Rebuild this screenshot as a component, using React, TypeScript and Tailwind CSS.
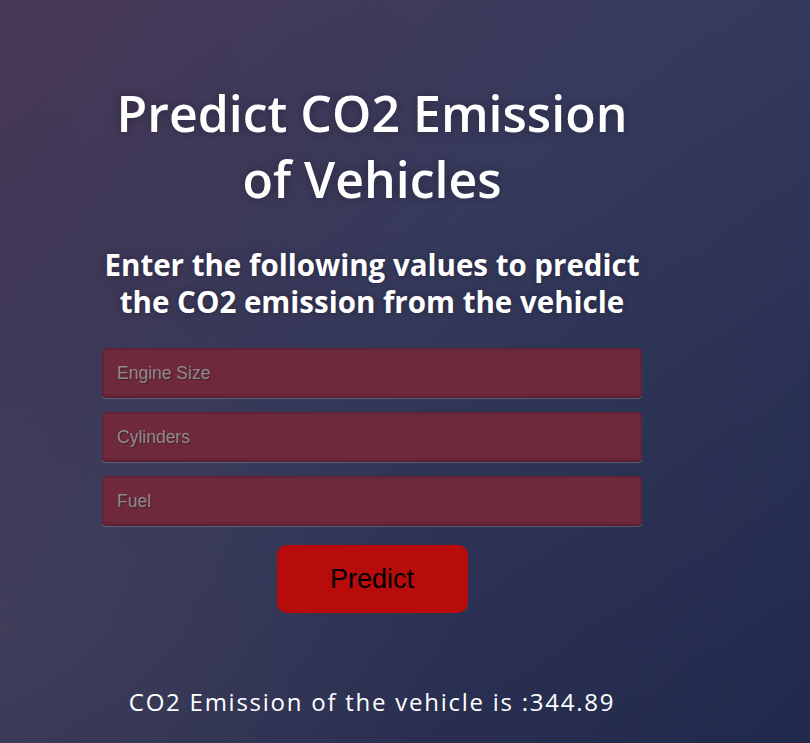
export default function App() {
  const fields = ["Engine Size", "Cylinders", "Fuel"];

  return (
    <div className="relative w-full h-[743px] overflow-hidden bg-[linear-gradient(135deg,#4a3450_0%,#363858_45%,#222a4e_100%)]">
      <div className="absolute inset-0 bg-[radial-gradient(ellipse_at_0%_85%,rgba(90,80,100,0.35)_0%,rgba(90,80,100,0)_40%)]" />
      <div className="absolute inset-0 bg-[linear-gradient(to_bottom,rgba(57,100,160,0.08)_0%,rgba(20,30,60,0.1)_100%)]" />

      <div className="relative pl-[102px] pt-[80px] w-[642px] flex flex-col items-center font-['Open_Sans',sans-serif] text-white">
        <h1 className="text-[50px] font-semibold leading-[66px] text-center whitespace-nowrap [text-shadow:0_0_10px_rgba(0,0,0,0.3)]">
          Predict CO2 Emission
          <br />
          of Vehicles
        </h1>

        <h2 className="mt-[34px] text-[29.5px] font-bold leading-[37px] text-center whitespace-nowrap [text-shadow:0_0_6px_rgba(0,0,0,0.3)]">
          Enter the following values to predict
          <br />
          the CO2 emission from the vehicle
        </h2>

        <form className="mt-[28px] w-full flex flex-col gap-[14px]" onSubmit={(e) => e.preventDefault()}>
          {fields.map((f) => (
            <input
              key={f}
              type="text"
              placeholder={f}
              className="w-full h-[50px] px-[14px] rounded-[4px] bg-[#6e293c] border border-[#5a1f30] shadow-[inset_0_-1px_3px_rgba(0,0,0,0.2),0_1px_1px_rgba(255,255,255,0.2)] font-['Liberation_Sans',sans-serif] text-[17.5px] text-gray-300 placeholder:text-[#8e8b8e] outline-none [text-shadow:1px_1px_1px_rgba(0,0,0,0.35)]"
            />
          ))}

          <div className="flex justify-center mt-[5px]">
            <button
              type="submit"
              className="w-[191px] h-[68px] rounded-[10px] bg-[#b80c0c] text-black font-['Liberation_Sans',sans-serif] text-[27px]"
            >
              Predict
            </button>
          </div>
        </form>

        <p className="mt-[74px] text-[24px] tracking-[1.75px] leading-[30px] text-center whitespace-nowrap">
          CO2 Emission of the vehicle is :344.89
        </p>
      </div>
    </div>
  );
}
